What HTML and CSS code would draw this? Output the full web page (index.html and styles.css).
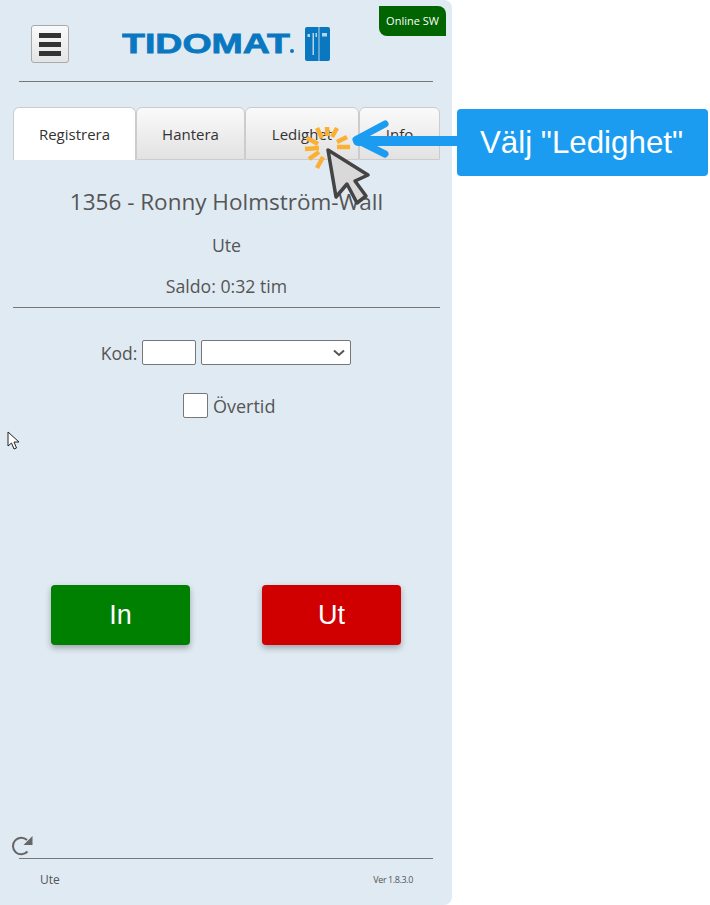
FILE: index.html
```html
<!DOCTYPE html>
<html lang="sv">
<head>
  <meta charset="UTF-8" />
  <meta name="viewport" content="width=device-width, initial-scale=1" />
  <title>Tidomat Online</title>
  <link rel="stylesheet" href="styles.css">
</head>
<body>

  <div class="panel">
    <div class="online-badge">Online SW</div>

    <div class="header">
      <button class="menu-btn" aria-label="Meny">
        <span></span><span></span><span></span>
      </button>
      <svg class="logo" width="208" height="34" viewBox="0 0 208 34">
        <text x="0" y="26" textLength="168" lengthAdjust="spacingAndGlyphs" class="logo-text">TIDOMAT</text>
        <circle cx="170" cy="24" r="2" fill="#0a78c0"/>
        <path d="M183 2 Q183 0 185 0 L196.600 0 L196.600 34 L185 34 Q183 34 183 32 Z M197.400 0 L206 0 Q208 0 208 2 L208 32 Q208 34 206 34 L197.400 34 Z" fill="#0a78c0"/>
        <path d="M185.500 7 h2.500 v3 h-2.500 z M190.500 6 h1.500 v22 h-1.500 z M193.500 6 h1.500 v4 h-1.500 z M200 6 h5 v3.500 h-5 z" fill="#b5d3ea"/>
      </svg>
    </div>
    <hr class="line line-short">

    <div class="tabs">
      <div class="tab tab-active tab-reg">Registrera</div>
      <div class="tab tab-han">Hantera</div>
      <div class="tab tab-led">Ledighet</div>
      <div class="tab tab-info">Info</div>
    </div>

    <div class="status">
      <div class="status-name">1356 - Ronny Holmström-Wall</div>
      <div class="status-state">Ute</div>
      <div class="status-saldo">Saldo: 0:32 tim</div>
    </div>
    <hr class="line">

    <div class="kod-row">
      <label>Kod:</label>
      <input type="text" class="kod-input">
      <select class="kod-select"><option></option></select>
    </div>

    <div class="check-row">
      <span class="checkbox"></span>
      <span>Övertid</span>
    </div>

    <div class="buttons">
      <button class="big-btn btn-in">In</button>
      <button class="big-btn btn-ut">Ut</button>
    </div>

    <div class="refresh">
      <svg width="22" height="22" viewBox="0 0 22 22">
        <path d="M16.500 16.500 A8.300 8.300 0 1 1 16 5" fill="none" stroke="#666" stroke-width="2"/>
        <path d="M21.500 1 V10 H12.500 Z" fill="#666"/>
      </svg>
    </div>
    <hr class="line line-short line-foot">
    <div class="footer">
      <span>Ute</span>
      <span class="version">Ver 1.8.3.0</span>
    </div>
  </div>

  <!-- small pointer left in the capture -->
  <svg class="small-cursor" width="14" height="20" viewBox="0 0 14 20">
    <path d="M1 1 V15 L4.500 12 L7 18 L9.500 17 L7 11 H12 Z" fill="#fff" stroke="#222" stroke-width="1"/>
  </svg>

  <!-- annotation on top of the screenshot, drawn in page coordinates -->
  <svg class="click-mark" width="160" height="90" viewBox="300 120 160 90">
    <g stroke="#fbb034" stroke-width="4.500">
      <path d="M327 127 L327.500 136"/>
      <path d="M337 128 L332 137"/>
      <path d="M347 137 L337 142"/>
      <path d="M350 147 L337 147"/>
      <path d="M317 128 L322 138"/>
      <path d="M307 138 L318 144"/>
      <path d="M305 149 L319 148"/>
      <path d="M319 152 L309 159"/>
      <path d="M323 157 L317 168"/>
    </g>
    <path d="M328 150 L336 197 L347 184 L357 203 L366 196 L355 181 L368 175 Z" fill="#d9d9d9" stroke="#444" stroke-width="3.500" stroke-linejoin="round"/>
    <g stroke="#1b9cf0" stroke-width="7" fill="none" stroke-linecap="round" stroke-linejoin="round">
      <path class="arrow-shaft" d="M358 141 H458"/>
      <path d="M385 124 L356 139.500 L385 154"/>
    </g>
  </svg>
  <div class="callout">Välj "Ledighet"</div>

</body>
</html>
```

FILE: styles.css
```css
* {
  box-sizing: border-box;
  margin: 0;
  padding: 0;
}

body {
  font-family: 'Open Sans', sans-serif;
  background: #fff;
  color: #555;
  width: 710px;
  height: 905px;
  overflow: hidden;
  position: relative;
}

.panel {
  position: relative;
  width: 452px;
  height: 905px;
  padding: 25px 12px 0 13px;
  background: #e0eaf3;
  border-radius: 0 8px 8px 0;
}

.online-badge {
  position: absolute;
  top: 6px;
  left: 379px;
  width: 67px;
  height: 30px;
  background: #006400;
  color: #fff;
  font-size: 11px;
  line-height: 30px;
  text-align: center;
  border-radius: 0 8px 0 8px;
}

.header {
  display: flex;
  align-items: flex-start;
  height: 38px;
  padding-left: 18px;
}

.menu-btn {
  width: 38px;
  height: 38px;
  display: flex;
  flex-direction: column;
  justify-content: center;
  gap: 4px;
  padding: 0 7px;
  background: linear-gradient(#fafafa, #e4e4e4);
  border: 1px solid #aaa;
  border-radius: 3px;
}

.menu-btn span {
  display: block;
  height: 5px;
  background: #333;
}

.logo {
  margin: 2px 0 0 53px;
}

.logo-text {
  font-family: 'Liberation Sans', sans-serif;
  font-weight: bold;
  font-size: 28px;
  fill: #0a78c0;
  stroke: #0a78c0;
  stroke-width: 0.8px;
}

.line {
  border: none;
  height: 1px;
  background: #777;
  width: 427px;
}

.line-short {
  width: 414px;
  margin: 18px 0 0 6px;
}

.tabs {
  display: flex;
  margin-top: 25px;
  height: 53px;
}

.tab {
  display: flex;
  align-items: center;
  justify-content: center;
  font-size: 15px;
  color: #333;
  background: linear-gradient(#fafafa, #e2e2e2);
  border: 1px solid #ccc;
  border-radius: 6px 6px 0 0;
}

.tab-active {
  background: #fff;
  border-bottom: none;
}

.tab-reg { width: 123px; }
.tab-han { width: 109px; }
.tab-led { width: 114px; }
.tab-info { width: 81px; }

.status {
  text-align: center;
  width: 427px;
}

.status-name {
  font-size: 22.5px;
  line-height: 30px;
  margin-top: 27px;
}

.status-state {
  font-size: 17.7px;
  line-height: 24px;
  margin-top: 16px;
}

.status-saldo {
  font-size: 17.7px;
  line-height: 24px;
  margin-top: 17px;
  margin-bottom: 9px;
}

.kod-row {
  display: flex;
  align-items: center;
  justify-content: center;
  gap: 5px;
  width: 426px;
  margin-top: 32px;
  font-size: 17.5px;
}

.kod-input {
  width: 54px;
  height: 25px;
  background: #fff;
  border: 1px solid #777;
  border-radius: 2px;
}

.kod-select {
  width: 150px;
  height: 25px;
  appearance: none;
  background: #fff url("data:image/svg+xml,%3Csvg xmlns='http://www.w3.org/2000/svg' width='12' height='8'%3E%3Cpath d='M1 1.500 L6 6 L11 1.500' fill='none' stroke='%23555' stroke-width='2'/%3E%3C/svg%3E") no-repeat right 5px center;
  border: 1px solid #777;
  border-radius: 2px;
}

.check-row {
  display: flex;
  align-items: center;
  gap: 5px;
  margin: 28px 0 0 170px;
  font-size: 18px;
}

.checkbox {
  display: block;
  width: 25px;
  height: 25px;
  background: #fff;
  border: 1px solid #777;
  border-radius: 2px;
}

.buttons {
  display: flex;
  gap: 72px;
  margin: 167px 0 0 38px;
}

.big-btn {
  width: 139px;
  height: 60px;
  border: none;
  border-radius: 4px;
  color: #fff;
  font-family: 'Liberation Sans', sans-serif;
  font-size: 27px;
  box-shadow: 0 3px 6px rgba(0, 0, 0, 0.3);
}

.btn-in { background: #008000; }
.btn-ut { background: #d00000; }

.refresh {
  height: 22px;
  margin: 190px 0 0 -2px;
}

.line-foot {
  margin-top: 1px;
}

.footer {
  display: flex;
  justify-content: space-between;
  align-items: center;
  margin-top: 12px;
  padding: 0 27px;
  font-size: 12px;
}

.version {
  font-size: 9px;
  letter-spacing: -0.4px;
}

.small-cursor {
  position: absolute;
  left: 7px;
  top: 431px;
}

.click-mark {
  position: absolute;
  left: 300px;
  top: 120px;
}

.arrow-shaft {
  stroke-width: 10px;
}

.callout {
  position: absolute;
  left: 457px;
  top: 109px;
  width: 251px;
  height: 67px;
  padding-right: 2px;
  background: #1b9cf0;
  color: #fff;
  font-family: 'Liberation Sans', sans-serif;
  font-size: 31.3px;
  line-height: 67px;
  text-align: center;
  border-radius: 4px;
}
```
